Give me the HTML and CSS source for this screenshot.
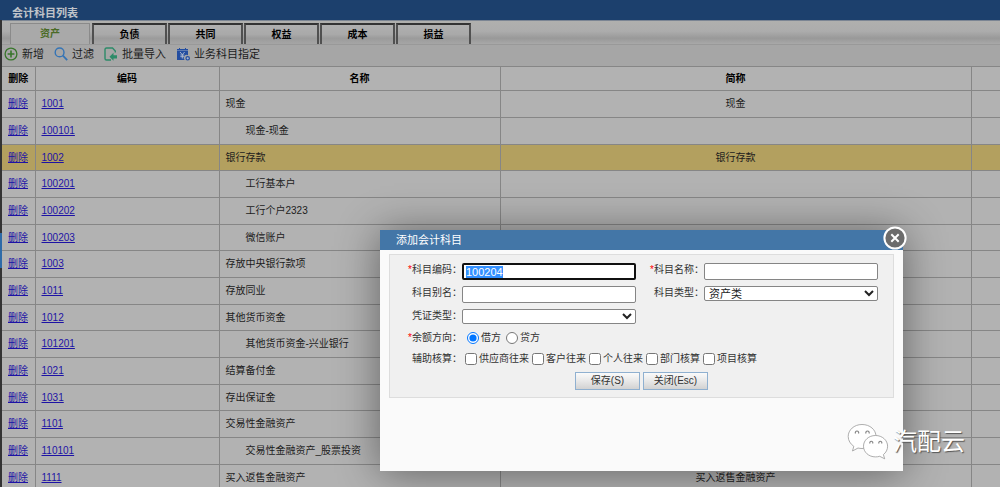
FILE: index.html
```html
<!DOCTYPE html>
<html lang="zh-CN">
<head>
<meta charset="utf-8">
<title>会计科目列表</title>
<link rel="stylesheet" href="styles.css">
</head>
<body>
<div class="page">
  <div class="rail"></div>
  <main class="main">
    <h1 class="title">会计科目列表</h1>
    <nav class="tabs">
      <button class="tab tab-active">资产</button>
      <button class="tab">负债</button>
      <button class="tab">共同</button>
      <button class="tab">权益</button>
      <button class="tab">成本</button>
      <button class="tab">损益</button>
    </nav>
    <div class="toolbar">
      <button class="tool"><svg class="icon" viewBox="0 0 14 14" fill="none" stroke="#38762b" stroke-width="1.3"><circle cx="7" cy="7" r="5.9"/><path d="M7 3.6v6.8M3.6 7h6.8" stroke-width="1.6"/></svg>新增</button>
      <button class="tool"><svg class="icon" viewBox="0 0 14 14" fill="none" stroke="#3574b5" stroke-width="1.4"><circle cx="5.6" cy="5.4" r="4.4"/><path d="M8.9 8.7l4.3 4.5" stroke-width="1.8"/></svg>过滤</button>
      <button class="tool"><svg class="icon" viewBox="0 0 14 14" fill="none" stroke="#2c8b68" stroke-width="1.4"><path d="M11.3 5.500V4L8.500 1H2.500Q1 1 1 2.500v9Q1 13 2.500 13H7"/><path d="M9.500 5.800v2.400H13v3.200H9.500v2.400L5.500 9.800z" fill="#2c8b68" stroke="none"/></svg>批量导入</button>
      <button class="tool"><svg class="icon" viewBox="0 0 14 14"><path d="M1 2h2V1h1v1h5V1h1v1h2v6.2a3 3 0 0 0-3.4 4.8H1z" fill="#234da0"/><path d="M1 3.5h11" stroke="#8498bd" stroke-width=".6"/><path d="M4 5l2.3 2.7L8.6 5M6.3 7.7V11.5M4.3 8h4M4.3 9.7h4" fill="none" stroke="#b5bfd2" stroke-width=".9"/><circle cx="11.7" cy="11.3" r="1.7" fill="#a8b5d0" stroke="#234da0" stroke-width="1.2"/></svg>业务科目指定</button>
    </div>
    <table class="accounts">
      <colgroup><col class="c-del"><col class="c-code"><col class="c-name"><col class="c-short"><col></colgroup>
      <thead><tr><th>删除</th><th>编码</th><th>名称</th><th>简称</th><th></th></tr></thead>
      <tbody>
        <tr><td><a href="#">删除</a></td><td><a href="#">1001</a></td><td>现金</td><td>现金</td><td></td></tr>
        <tr><td><a href="#">删除</a></td><td><a href="#">100101</a></td><td class="child">现金-现金</td><td></td><td></td></tr>
        <tr class="selected"><td><a href="#">删除</a></td><td><a href="#">1002</a></td><td>银行存款</td><td>银行存款</td><td></td></tr>
        <tr><td><a href="#">删除</a></td><td><a href="#">100201</a></td><td class="child">工行基本户</td><td></td><td></td></tr>
        <tr><td><a href="#">删除</a></td><td><a href="#">100202</a></td><td class="child">工行个户2323</td><td></td><td></td></tr>
        <tr><td><a href="#">删除</a></td><td><a href="#">100203</a></td><td class="child">微信账户</td><td></td><td></td></tr>
        <tr><td><a href="#">删除</a></td><td><a href="#">1003</a></td><td>存放中央银行款项</td><td></td><td></td></tr>
        <tr><td><a href="#">删除</a></td><td><a href="#">1011</a></td><td>存放同业</td><td></td><td></td></tr>
        <tr><td><a href="#">删除</a></td><td><a href="#">1012</a></td><td>其他货币资金</td><td></td><td></td></tr>
        <tr><td><a href="#">删除</a></td><td><a href="#">101201</a></td><td class="child">其他货币资金-兴业银行</td><td></td><td></td></tr>
        <tr><td><a href="#">删除</a></td><td><a href="#">1021</a></td><td>结算备付金</td><td></td><td></td></tr>
        <tr><td><a href="#">删除</a></td><td><a href="#">1031</a></td><td>存出保证金</td><td></td><td></td></tr>
        <tr><td><a href="#">删除</a></td><td><a href="#">1101</a></td><td>交易性金融资产</td><td></td><td></td></tr>
        <tr><td><a href="#">删除</a></td><td><a href="#">110101</a></td><td class="child">交易性金融资产_股票投资</td><td></td><td></td></tr>
        <tr><td><a href="#">删除</a></td><td><a href="#">1111</a></td><td>买入返售金融资产</td><td>买入返售金融资产</td><td></td></tr>
      </tbody>
    </table>
  </main>
</div>

<section class="dialog" role="dialog" aria-labelledby="dlg-title">
  <h2 class="dialog-title" id="dlg-title">添加会计科目</h2>
  <button class="close" aria-label="关闭"><svg class="close-icon" viewBox="0 0 24 24"><circle cx="12" cy="12" r="10.6" fill="#6c6c6c" stroke="#fff" stroke-width="2"/><path d="M8.3 8.3l7.4 7.4M15.7 8.3l-7.4 7.4" stroke="#fff" stroke-width="2"/></svg></button>
  <form class="form">
    <div class="fields">
      <label class="label" for="code"><span class="req">*</span>科目编码：</label>
      <input class="field focused" id="code" type="text" value="100204">
      <label class="label" for="name"><span class="req">*</span>科目名称：</label>
      <input class="field" id="name" type="text">
      <label class="label" for="alias">科目别名：</label>
      <input class="field" id="alias" type="text">
      <label class="label" for="kind">科目类型：</label>
      <select class="field select" id="kind"><option>资产类</option></select>
      <label class="label" for="voucher">凭证类型：</label>
      <select class="field select" id="voucher"><option></option></select>
    </div>
    <div class="line" role="radiogroup" aria-labelledby="dir">
      <span class="label" id="dir"><span class="req">*</span>余额方向：</span>
      <label class="choice radio-choice"><input class="radio" type="radio" name="dir" checked>借方</label>
      <label class="choice radio-choice"><input class="radio" type="radio" name="dir">贷方</label>
    </div>
    <div class="line" role="group" aria-labelledby="aux">
      <span class="label" id="aux">辅助核算：</span>
      <label class="choice"><input class="check" type="checkbox">供应商往来</label>
      <label class="choice"><input class="check" type="checkbox">客户往来</label>
      <label class="choice"><input class="check" type="checkbox">个人往来</label>
      <label class="choice"><input class="check" type="checkbox">部门核算</label>
      <label class="choice"><input class="check" type="checkbox">项目核算</label>
    </div>
    <div class="actions">
      <button class="btn" type="button">保存(S)</button>
      <button class="btn" type="button">关闭(Esc)</button>
    </div>
  </form>
</section>

<div class="watermark">
  <svg class="wm-icon" viewBox="0 0 42 38" fill="#fff" stroke="#999" stroke-width=".8"><path d="M15 1.5C7 1.5 1.2 7 1.2 13.5c0 4 2.2 7.500 5.600 9.800L5.500 28l5.500-3c1.300.3 2.600.5 4 .5 8 0 14-5.300 14-12S23 1.500 15 1.500z"/><path d="M28.500 12.500c-6.800 0-12 4.800-12 10.700s5.200 10.700 12 10.700c1.500 0 2.900-.2 4.200-.6l5 2.500-1.300-4.200c2.600-2 4.200-5 4.200-8.400 0-5.900-5.300-10.700-12.100-10.700z"/><g fill="none" stroke="#888" stroke-width="1.200"><path d="M8.500 10.500a1.700 1.700 0 1 1 3 0M19 10.500a1.700 1.700 0 1 1 3 0M23 20.500a1.500 1.500 0 1 1 2.600 0M32 20.500a1.500 1.500 0 1 1 2.600 0"/></g></svg>
  <span>汽配云</span>
</div>
<script src="app.js"></script>
</body>
</html>
```

FILE: styles.css
```css
* { box-sizing: border-box; }
body {
  margin: 0;
  background: #b2b2b2;
  color: #1c1c1c;
  font: 10px/14px "Liberation Sans", "Noto Sans CJK SC", sans-serif;
  overflow: hidden;
}
button, input, select { font: inherit; color: inherit; margin: 0; }
.page { display: flex; height: 100vh; overflow: hidden; }
.rail { flex: none; width: 2px; background: linear-gradient(#1c406d 0 20px, #333 20px 233px, #2e6ba8 233px 268px, #333 268px); }
.main { flex: 1; min-width: 0; }
.title {
  margin: 0;
  height: 20px;
  padding: 6px 10px 0;
  background: #1c406d;
  color: #c0c4c9;
  font-size: 11px;
  line-height: 14px;
  font-weight: bold;
}
.tabs {
  display: flex;
  align-items: flex-end;
  gap: 1px;
  height: 25px;
  padding: 0 8px;
  border-top: 1px solid #7b8593;
  border-bottom: 1px solid #999;
  background: linear-gradient(#b0b0ae, #acacac 45%, #999 75%, #a8a8a8);
}
.tab {
  width: 75px;
  height: 21px;
  padding: 0;
  border: 2px solid #505050;
  border-top-color: #333;
  border-bottom: 0;
  background: linear-gradient(#b0b0b0, #a9a9a9 50%, #9b9b9b 70%, #a5a5a5);
  color: #000;
  font-weight: bold;
}
.tab-active {
  width: 80px;
  margin-right: 1px;
  border: 1px solid #8a8a8a;
  border-bottom: 0;
  background: #a9a9a9;
  color: #4b6b26;
}
.toolbar {
  display: flex;
  align-items: flex-start;
  gap: 10px;
  height: 21px;
  padding: 1px 2px;
  background: #a6a6a6;
}
.tool {
  display: flex;
  align-items: center;
  gap: 4px;
  padding: 0;
  border: 0;
  background: none;
  font-size: 11px;
  line-height: 16px;
}
.icon { width: 14px; height: 14px; }
.accounts { width: 100%; table-layout: fixed; border-collapse: collapse; }
.c-del { width: 33px; }
.c-code { width: 184px; }
.c-name { width: 281px; }
.c-short { width: 471px; }
.accounts th, .accounts td {
  padding: 0 6px;
  border: 1px solid #868686;
  text-align: left;
  white-space: nowrap;
}
.accounts th { height: 24px; text-align: center; color: #000; }
.accounts td { height: 27px; }
.accounts tbody tr:nth-child(3n) td { height: 26px; }
.accounts tr > :first-child { border-left: 0; }
.accounts tr > :last-child { border-right: 0; }
.accounts td:nth-child(4) { text-align: center; }
.accounts .child { padding-left: 26px; }
.accounts a { color: #1d12a5; text-decoration: underline; }
.selected { background: #b3a05f; }

.dialog {
  position: absolute;
  top: 230px;
  left: 38%;
  width: 523px;
  height: 241px;
  background: #fafafa;
  color: #333;
  box-shadow: 0 2px 40px rgba(0, 0, 0, .45);
}
.dialog-title {
  margin: 0;
  height: 20px;
  padding: 2px 16px;
  background: #4376a7;
  color: #fff;
  font-size: 11px;
  line-height: 16px;
  font-weight: normal;
}
.close { position: absolute; top: -4px; right: -4px; padding: 0; border: 0; background: none; }
.close-icon { display: block; width: 24px; height: 24px; }
.form {
  margin: 4px 9px;
  padding: 8px 14px 7px 0;
  border: 1px solid #ddd;
  background: #f0f0f0;
}
.fields { display: grid; grid-template-columns: 72px 174px 68px 174px; row-gap: 6px; align-items: start; margin-bottom: 3px; }
.label { text-align: right; white-space: nowrap; font-family: "Liberation Sans", "Noto Sans CJK TC", sans-serif; }
.req { color: #f00; }
.field {
  width: 100%;
  height: 17px;
  padding: 0 2px;
  border: 1px solid #858585;
  border-radius: 2px;
  background: #fff;
  color: #222;
  font-size: 11px;
  line-height: 14px;
  outline: 0;
}
.focused { border: 2px solid #101010; }
.field::selection { background: #3390ff; color: #fff; }
.select { height: 15px; padding: 0; }
.line { display: flex; height: 21px; align-items: center; }
.line .label { width: 72px; }
.choice { display: flex; align-items: center; gap: 2px; margin-left: 3px; }
.radio-choice { margin-left: 5px; }
.radio, .check { width: 12px; height: 12px; accent-color: #0075ff; }
.actions { display: flex; justify-content: center; gap: 3px; padding-left: 14px; margin-top: 3px; }
.btn {
  width: 65px;
  height: 18px;
  padding: 0;
  border: 1px solid #8fb0d0;
  background: linear-gradient(#fafafa, #e8e8e8 50%, #d2d2d2);
}
.watermark {
  position: absolute;
  left: 847px;
  top: 423px;
  display: flex;
  align-items: center;
  gap: 4px;
  color: #fff;
  font-size: 24px;
  line-height: 38px;
  text-shadow: 1px 1px 1px #555;
  pointer-events: none;
}
.wm-icon { width: 42px; height: 38px; }
```

FILE: app.js
```js
const code = document.getElementById("code");
code.focus();
code.select();
```
